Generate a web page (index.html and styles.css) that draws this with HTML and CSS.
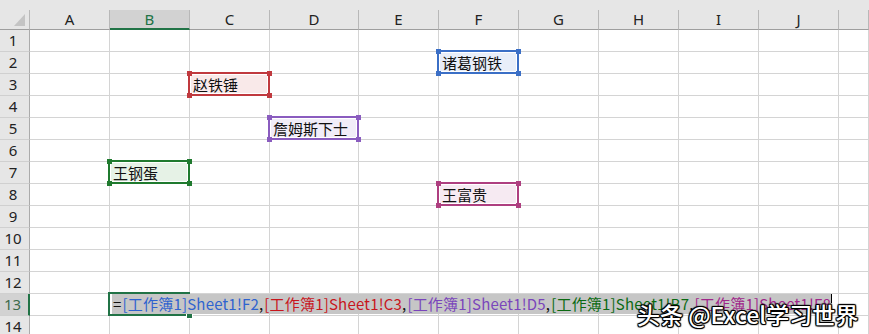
FILE: index.html
```html
<!DOCTYPE html>
<html lang="zh-CN">
<head>
    <meta charset="UTF-8">
    <title>工作簿1 - Sheet1</title>
    <link rel="stylesheet" href="styles.css">
</head>
<body>
    <div class="sheet">
        <!-- Column headers -->
        <div class="colhead">
            <div class="corner"><span class="tri"></span></div>
            <div class="ch">A</div>
            <div class="ch on">B</div>
            <div class="ch">C</div>
            <div class="ch">D</div>
            <div class="ch">E</div>
            <div class="ch">F</div>
            <div class="ch">G</div>
            <div class="ch">H</div>
            <div class="ch">I</div>
            <div class="ch">J</div>
            <div class="ch"></div>
        </div>

        <div class="row"><div class="rh">1</div><div class="c"></div><div class="c"></div><div class="c"></div><div class="c"></div><div class="c"></div><div class="c"></div><div class="c"></div><div class="c"></div><div class="c"></div><div class="c"></div><div class="c"></div></div>
        <div class="row"><div class="rh">2</div><div class="c"></div><div class="c"></div><div class="c"></div><div class="c"></div><div class="c"></div>
            <div class="c"><div class="ref blue">诸葛钢铁<i class="tl"></i><i class="tr"></i><i class="bl"></i><i class="br"></i></div></div>
            <div class="c"></div><div class="c"></div><div class="c"></div><div class="c"></div><div class="c"></div></div>
        <div class="row"><div class="rh">3</div><div class="c"></div><div class="c"></div>
            <div class="c"><div class="ref red">赵铁锤<i class="tl"></i><i class="tr"></i><i class="bl"></i><i class="br"></i></div></div>
            <div class="c"></div><div class="c"></div><div class="c"></div><div class="c"></div><div class="c"></div><div class="c"></div><div class="c"></div><div class="c"></div></div>
        <div class="row"><div class="rh">4</div><div class="c"></div><div class="c"></div><div class="c"></div><div class="c"></div><div class="c"></div><div class="c"></div><div class="c"></div><div class="c"></div><div class="c"></div><div class="c"></div><div class="c"></div></div>
        <div class="row"><div class="rh">5</div><div class="c"></div><div class="c"></div><div class="c"></div>
            <div class="c"><div class="ref purple">詹姆斯下士<i class="tl"></i><i class="tr"></i><i class="bl"></i><i class="br"></i></div></div>
            <div class="c"></div><div class="c"></div><div class="c"></div><div class="c"></div><div class="c"></div><div class="c"></div><div class="c"></div></div>
        <div class="row"><div class="rh">6</div><div class="c"></div><div class="c"></div><div class="c"></div><div class="c"></div><div class="c"></div><div class="c"></div><div class="c"></div><div class="c"></div><div class="c"></div><div class="c"></div><div class="c"></div></div>
        <div class="row"><div class="rh">7</div><div class="c"></div>
            <div class="c"><div class="ref green">王钢蛋<i class="tl"></i><i class="tr"></i><i class="bl"></i><i class="br"></i></div></div>
            <div class="c"></div><div class="c"></div><div class="c"></div><div class="c"></div><div class="c"></div><div class="c"></div><div class="c"></div><div class="c"></div><div class="c"></div></div>
        <div class="row"><div class="rh">8</div><div class="c"></div><div class="c"></div><div class="c"></div><div class="c"></div><div class="c"></div>
            <div class="c"><div class="ref pink">王富贵<i class="tl"></i><i class="tr"></i><i class="bl"></i><i class="br"></i></div></div>
            <div class="c"></div><div class="c"></div><div class="c"></div><div class="c"></div><div class="c"></div></div>
        <div class="row"><div class="rh">9</div><div class="c"></div><div class="c"></div><div class="c"></div><div class="c"></div><div class="c"></div><div class="c"></div><div class="c"></div><div class="c"></div><div class="c"></div><div class="c"></div><div class="c"></div></div>
        <div class="row"><div class="rh">10</div><div class="c"></div><div class="c"></div><div class="c"></div><div class="c"></div><div class="c"></div><div class="c"></div><div class="c"></div><div class="c"></div><div class="c"></div><div class="c"></div><div class="c"></div></div>
        <div class="row"><div class="rh">11</div><div class="c"></div><div class="c"></div><div class="c"></div><div class="c"></div><div class="c"></div><div class="c"></div><div class="c"></div><div class="c"></div><div class="c"></div><div class="c"></div><div class="c"></div></div>
        <div class="row"><div class="rh">12</div><div class="c"></div><div class="c"></div><div class="c"></div><div class="c"></div><div class="c"></div><div class="c"></div><div class="c"></div><div class="c"></div><div class="c"></div><div class="c"></div><div class="c"></div></div>
        <div class="row"><div class="rh on">13</div><div class="c"></div>
            <div class="c">
                <div class="sel"><i class="handle"></i></div>
                <div class="editor"><span class="k">=</span><span class="f-blue">[工作簿1]Sheet1!F2</span><span class="k">,</span><span class="f-red">[工作簿1]Sheet1!C3</span><span class="k">,</span><span class="f-purple">[工作簿1]Sheet1!D5</span><span class="k">,</span><span class="f-green">[工作簿1]Sheet1!B7</span><span class="k">,</span><span class="f-pink">[工作簿1]Sheet1!F8</span></div>
                <i class="caret"></i>
            </div>
            <div class="c"></div><div class="c"></div><div class="c"></div><div class="c"></div><div class="c"></div><div class="c"></div><div class="c"></div><div class="c"></div><div class="c"></div></div>
        <div class="row"><div class="rh">14</div><div class="c"></div><div class="c"></div><div class="c"></div><div class="c"></div><div class="c"></div><div class="c"></div><div class="c"></div><div class="c"></div><div class="c"></div><div class="c"></div><div class="c"></div></div>

        <div class="mark">头条 @Excel学习世界</div>
    </div>
</body>
</html>
```

FILE: styles.css
```css
* { margin: 0; padding: 0; box-sizing: border-box; }
body { width: 869px; height: 334px; overflow: hidden; background: #fff; font-family: "Noto Sans CJK SC", sans-serif; }

.sheet { position: relative; width: 869px; height: 334px; overflow: hidden; }

/* Column headers */
.colhead, .row { display: grid; grid-template-columns: 30px 80px 80px 80px 89px 80px 80px 80px 80px 80px 80px 1fr; }
.colhead { height: 30px; padding-top: 10px; background: #e6e6e6; }
.corner { position: relative; border-right: 1px solid #b8b8b8; border-bottom: 1px solid #9e9e9e; }
.tri { position: absolute; right: 4px; bottom: 3px; width: 0; height: 0; border-left: 11px solid transparent; border-bottom: 12px solid #c4c4c4; }
.ch { border-right: 1px solid #b8b8b8; border-bottom: 1px solid #9e9e9e; font-family: "Noto Sans", sans-serif; font-size: 15px; line-height: 18px; color: #222; text-align: center; }
.ch.on { background: #d2d2d2; color: #217346; border-bottom: 2px solid #217346; }

/* Rows */
.row { height: 22px; }
.rh { background: #e6e6e6; border-right: 1px solid #ababab; border-bottom: 1px solid #d0d0d0; font-family: "Noto Sans", sans-serif; font-size: 15px; line-height: 21px; color: #222; text-align: center; padding-right: 3px; }
.rh.on { background: #d2d2d2; color: #3d6b4c; border-right: 2px solid #217346; }
.c { position: relative; border-right: 1px solid #d4d4d4; border-bottom: 1px solid #d4d4d4; }

/* Reference boxes while editing */
.ref { position: absolute; top: -2px; left: -2px; right: -1px; bottom: -1px; z-index: 1; border: 2px solid; box-shadow: inset 0 0 0 1px #fff; padding-left: 3px; font-size: 15px; line-height: 21px; color: #111; white-space: nowrap; }
.ref i { position: absolute; width: 5px; height: 5px; background: inherit; }
.ref .tl { left: -3.5px; top: -3.5px; }
.ref .tr { right: -3.5px; top: -3.5px; }
.ref .bl { left: -3.5px; bottom: -3.5px; }
.ref .br { right: -3.5px; bottom: -3.5px; }
.ref.blue { border-color: #3b6fc6; background-color: #e8eef9; }
.ref.blue i { background: #3b6fc6; }
.ref.red { border-color: #c0393e; background-color: #f9e9e9; }
.ref.red i { background: #c0393e; }
.ref.purple { border-color: #8a5cbf; background-color: #f1edf8; }
.ref.purple i { background: #8a5cbf; }
.ref.green { border-color: #1f7a2e; background-color: #e6f2e6; }
.ref.green i { background: #1f7a2e; }
.ref.pink { border-color: #ae3f80; background-color: #f6eaf2; }
.ref.pink i { background: #ae3f80; }

/* Active cell */
.sel { position: absolute; top: -2px; left: -2px; right: -1px; bottom: -1px; border: 2px solid #217346; z-index: 1; }
.handle { position: absolute; right: -5px; bottom: -5px; width: 7px; height: 7px; background: #217346; border: 1px solid #fff; }
.editor { position: absolute; left: 2px; top: 0; height: 20px; z-index: 2; background: #c6c6c6; padding: 0 1px; font-size: 15px; line-height: 20px; letter-spacing: 0.2px; white-space: nowrap; }
.k { color: #111; margin-right: 1px; }
.f-blue { color: #2f63cf; }
.f-red { color: #c8161d; }
.f-purple { color: #7a45bb; }
.f-green { color: #0b6a12; }
.f-pink { color: #a0268a; }
.caret { position: absolute; left: 721px; top: 0; width: 1px; height: 9px; background: #000; z-index: 3; }

/* Watermark */
.mark { position: absolute; left: 637px; top: 300px; z-index: 5; font-size: 23px; line-height: 28px; font-weight: 500; color: #fff; white-space: nowrap;
    text-shadow: 1px 0 0 #000, -1px 0 0 #000, 0 1px 0 #000, 0 -1px 0 #000, 1px 1px 1px #000, -1px -1px 1px #000, 1px -1px 1px #000, -1px 1px 1px #000; }
```
